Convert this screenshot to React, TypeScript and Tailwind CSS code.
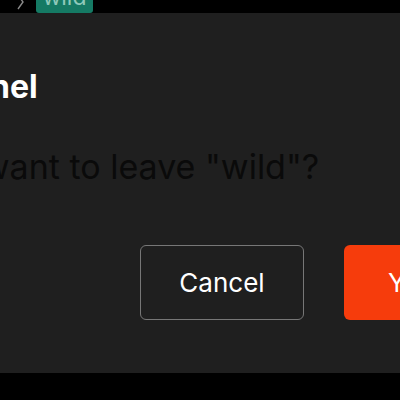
export default function App() {
  return (
    <div
      className="flex h-[400px] w-[400px] flex-col overflow-hidden bg-black"
      style={{ fontFamily: "Inter, 'Liberation Sans', sans-serif" }}
    >
      {/* breadcrumb strip behind the sheet */}
      <div className="flex h-[13px] shrink-0 items-end overflow-hidden">
        <svg width="10" height="14" viewBox="0 0 10 14" className="mb-[2px] ml-[15px] text-[#8a8a8a]">
          <path d="M3 -2 L8 5 L3 12" fill="none" stroke="currentColor" strokeWidth="1.4" />
        </svg>
        <div className="ml-[11px] flex h-[30px] w-[57px] items-end justify-center rounded-b-[3px] bg-[#157a64] pb-[4px] text-[23px] leading-none text-[#8fc9bb]">
          wild
        </div>
      </div>

      <div className="flex h-[360px] shrink-0 flex-col bg-[#1f1f1f]">
        <h2 className="mt-[50px] -ml-[188px] whitespace-nowrap text-[32px] font-bold leading-[48px] text-white">
          Leave channel
        </h2>
        <p className="mt-[36px] -ml-[300px] whitespace-nowrap text-[34px] leading-[40px] text-[#0a0a0a]">
          Are you sure you want to leave "wild"?
        </p>
        <div className="mt-[58px] ml-[140px] flex gap-[40px]">
          <button className="h-[75px] w-[164px] shrink-0 rounded-[6px] border border-[#777777] text-[26px] text-white">
            Cancel
          </button>
          <button className="h-[75px] w-[164px] shrink-0 rounded-[6px] bg-[#f63c0c] pl-[4px] text-left text-[26px] text-white">
            <span className="ml-[40px]">Yes</span>
          </button>
        </div>
      </div>
    </div>
  );
}
